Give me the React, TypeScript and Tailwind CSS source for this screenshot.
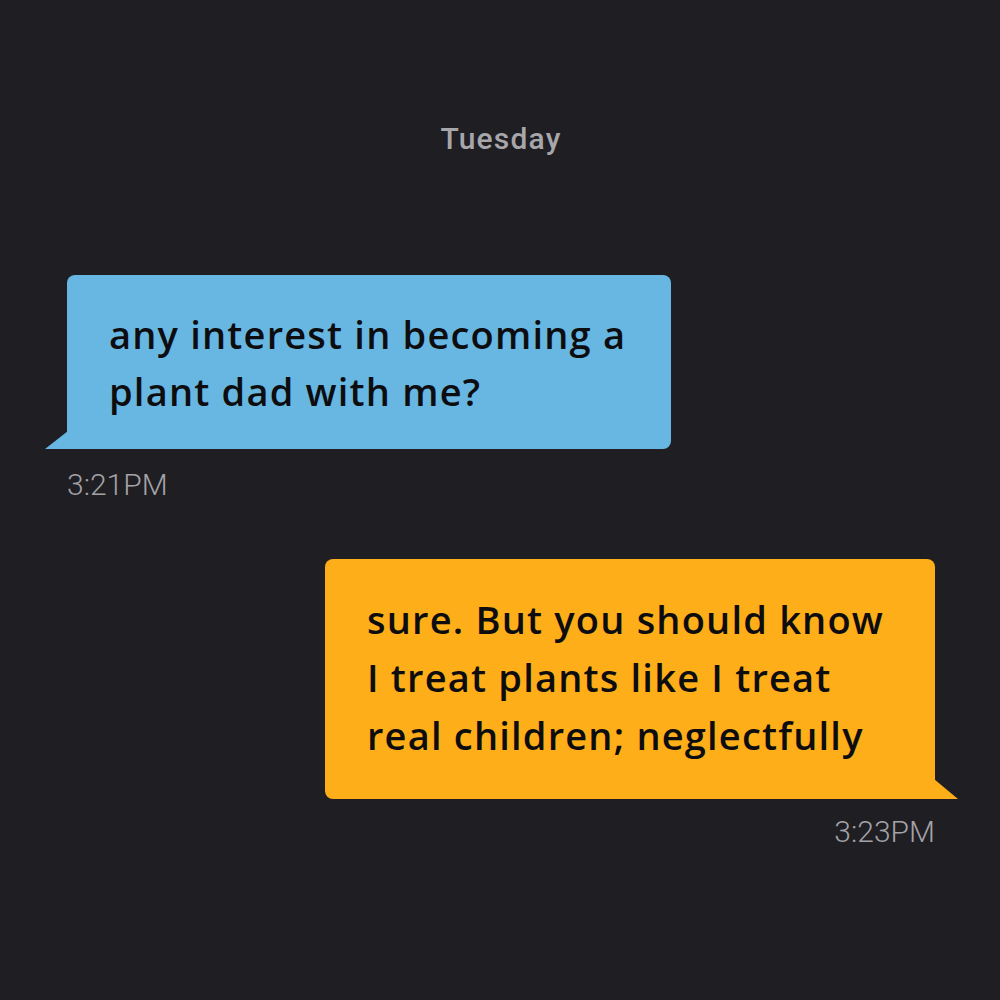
import React from "react";

const Tail = ({ side, color }: { side: "left" | "right"; color: string }) =>
  side === "left" ? (
    <svg
      className="absolute bottom-0 -left-[22px]"
      width="23"
      height="18"
      viewBox="0 0 23 18"
    >
      <polygon points="23,0 0,18 23,18" fill={color} />
    </svg>
  ) : (
    <svg
      className="absolute bottom-0 -right-[23px]"
      width="24"
      height="20"
      viewBox="0 0 24 20"
    >
      <polygon points="0,0 24,20 0,20" fill={color} />
    </svg>
  );

export default function App() {
  return (
    <div className="w-[1000px] h-[1000px] bg-[#1f1e23] flex flex-col pl-[67px] pr-[65px] font-['Roboto',sans-serif]">
      <div className="pt-[122px] text-center text-[30px] leading-[34px] font-medium text-[#a7a6ab] tracking-[1.2px]">
        Tuesday
      </div>

      {/* received */}
      <div className="mt-[119px] self-start relative w-[604px] h-[174px] bg-[#67b7e2] rounded-[8px] rounded-bl-none pl-[42px] pt-[31px]">
        <div className="font-['Open_Sans',sans-serif] text-[38px] leading-[57px] font-semibold tracking-[1.2px] text-[#0d0d10]">
          <div>any interest in becoming a</div>
          <div>plant dad with me?</div>
        </div>
        <Tail side="left" color="#67b7e2" />
      </div>
      <div className="mt-[20px] text-[30px] leading-[32px] font-light text-[#a3a2a7]">
        3:21PM
      </div>

      {/* sent */}
      <div className="mt-[58px] self-end relative w-[610px] h-[240px] bg-[#fdae18] rounded-[8px] rounded-br-none pl-[42px] pt-[31px]">
        <div className="font-['Open_Sans',sans-serif] text-[38px] leading-[58px] font-semibold tracking-[1.2px] text-[#0d0d10]">
          <div>sure. But you should know</div>
          <div>I treat plants like I treat</div>
          <div>real children; neglectfully</div>
        </div>
        <Tail side="right" color="#fdae18" />
      </div>
      <div className="mt-[17px] self-end text-[30px] leading-[32px] font-light text-[#a3a2a7]">
        3:23PM
      </div>
    </div>
  );
}
